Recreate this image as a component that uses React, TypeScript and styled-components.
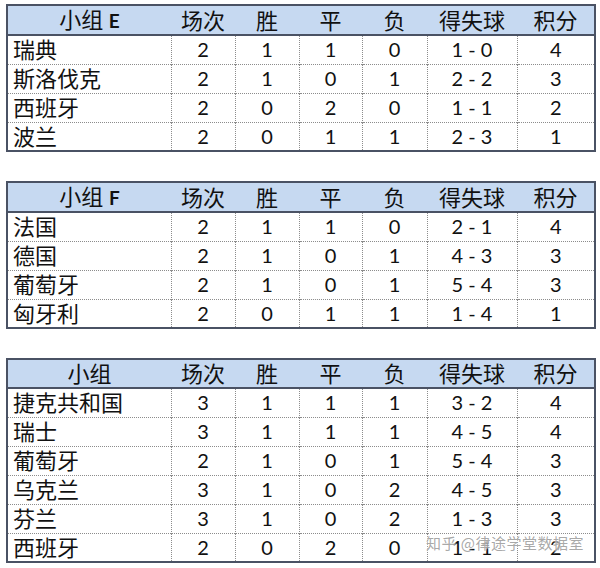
import * as React from "react";
import styled, { createGlobalStyle } from "styled-components";

const GlobalStyle = createGlobalStyle`
  html, body {
    margin: 0;
    padding: 0;
    background: #ffffff;
  }
  body {
    font-family: Lato, "Noto Sans CJK SC", sans-serif;
    color: #111111;
  }
`;

const Page = styled.div`
  display: flex;
  flex-direction: column;
  gap: 29px;
  padding: 4px 6px 0 6px;
`;

const TableWrap = styled.div`
  position: relative;
  width: 588px;
`;

const Table = styled.table`
  width: 588px;
  table-layout: fixed;
  border-collapse: collapse;
  border: 2px solid #4a5264;
`;

const HeadRow = styled.tr`
  height: 29px;
  background: #c6d9f1;
  border-bottom: 2px solid #4a5264;
`;

const HeadCell = styled.th`
  padding: 0;
  font-family: Lato, "Noto Sans CJK SC", sans-serif;
  font-size: 22px;
  font-weight: 400;
  text-align: center;
  line-height: 27px;
  white-space: nowrap;

  b {
    font-weight: 700;
    font-size: 19px;
  }
`;

const Row = styled.tr`
  height: 29px;
`;

const Cell = styled.td<{ $name?: boolean }>`
  padding: 0 ${(p) => (p.$name ? "5px" : "0")};
  border-top: 1px dotted #8c8c8c;
  border-left: 1px dotted #8c8c8c;
  text-align: ${(p) => (p.$name ? "left" : "center")};
  font-size: ${(p) => (p.$name ? "22px" : "20px")};
  line-height: 27px;
  white-space: nowrap;
`;

const Watermark = styled.div`
  position: absolute;
  right: 10px;
  bottom: 10px;
  font-family: "Noto Sans CJK SC", sans-serif;
  font-size: 15px;
  color: rgba(130, 130, 130, 0.7);
  text-shadow: 0 0 2px #ffffff, 0 0 2px #ffffff;
  letter-spacing: 0.5px;
  pointer-events: none;
`;

const widths = [164, 64, 64, 63, 65, 90, 78];

type Team = [string, number, number, number, number, string, number];

interface Group {
  title: React.ReactNode;
  teams: Team[];
  mark?: boolean;
}

const groups: Group[] = [
  {
    title: (
      <>
        小组 <b>E</b>
      </>
    ),
    teams: [
      ["瑞典", 2, 1, 1, 0, "1 - 0", 4],
      ["斯洛伐克", 2, 1, 0, 1, "2 - 2", 3],
      ["西班牙", 2, 0, 2, 0, "1 - 1", 2],
      ["波兰", 2, 0, 1, 1, "2 - 3", 1],
    ],
  },
  {
    title: (
      <>
        小组 <b>F</b>
      </>
    ),
    teams: [
      ["法国", 2, 1, 1, 0, "2 - 1", 4],
      ["德国", 2, 1, 0, 1, "4 - 3", 3],
      ["葡萄牙", 2, 1, 0, 1, "5 - 4", 3],
      ["匈牙利", 2, 0, 1, 1, "1 - 4", 1],
    ],
  },
  {
    title: "小组",
    mark: true,
    teams: [
      ["捷克共和国", 3, 1, 1, 1, "3 - 2", 4],
      ["瑞士", 3, 1, 1, 1, "4 - 5", 4],
      ["葡萄牙", 2, 1, 0, 1, "5 - 4", 3],
      ["乌克兰", 3, 1, 0, 2, "4 - 5", 3],
      ["芬兰", 3, 1, 0, 2, "1 - 3", 3],
      ["西班牙", 2, 0, 2, 0, "1 - 1", 2],
    ],
  },
];

const heads = ["场次", "胜", "平", "负", "得失球", "积分"];

const GroupTable: React.FC<Group> = ({ title, teams, mark }) => (
  <TableWrap>
    <Table>
      <colgroup>
        {widths.map((w, i) => (
          <col key={i} style={{ width: w }} />
        ))}
      </colgroup>
      <thead>
        <HeadRow>
          <HeadCell>{title}</HeadCell>
          {heads.map((h) => (
            <HeadCell key={h}>{h}</HeadCell>
          ))}
        </HeadRow>
      </thead>
      <tbody>
        {teams.map((t) => (
          <Row key={t[0]}>
            <Cell $name>{t[0]}</Cell>
            {t.slice(1).map((v, i) => (
              <Cell key={i}>{v}</Cell>
            ))}
          </Row>
        ))}
      </tbody>
    </Table>
    {mark && <Watermark>知乎 @律途学堂数据室</Watermark>}
  </TableWrap>
);

export default function App() {
  return (
    <>
      <GlobalStyle />
      <Page>
        {groups.map((g, i) => (
          <GroupTable key={i} {...g} />
        ))}
      </Page>
    </>
  );
}
